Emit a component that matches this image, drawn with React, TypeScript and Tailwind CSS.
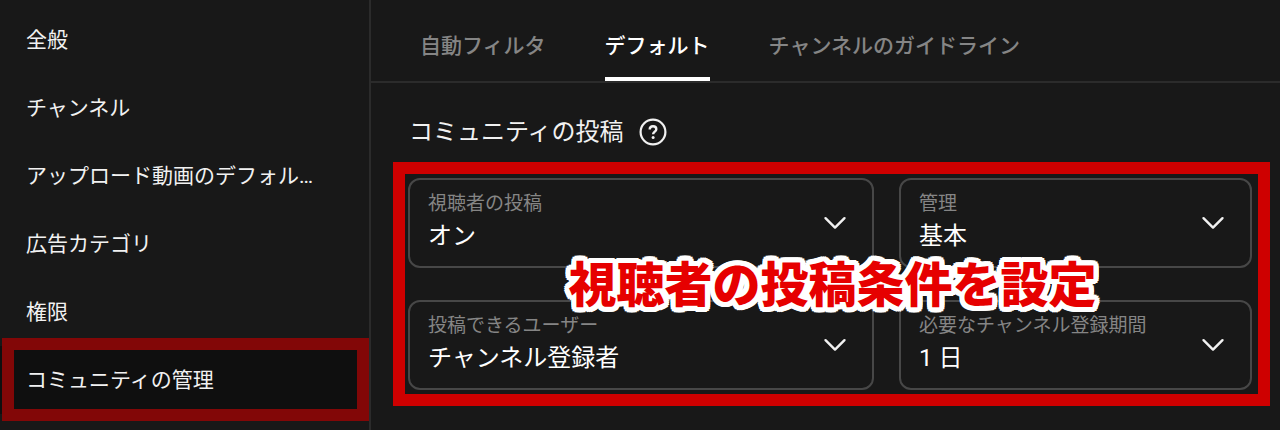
import React, { useState } from 'react';

interface SelectFieldProps {
  id: string;
  label: string;
  options: string[];
}

const menuItems = [
  '全般',
  'チャンネル',
  'アップロード動画のデフォル…',
  '広告カテゴリ',
  '権限',
  'コミュニティの管理',
];

const tabs = ['自動フィルタ', 'デフォルト', 'チャンネルのガイドライン'];

const HelpIcon: React.FC = () => (
  <svg viewBox="0 0 28 28" className="w-7 h-7" fill="none" stroke="currentColor" strokeWidth="2.2">
    <circle cx="14" cy="14" r="12.4" />
    <path d="M10.7 11.6c0-2 1.4-3.3 3.3-3.3s3.3 1.3 3.3 3c0 2.2-3.2 2.6-3.2 5" strokeWidth="2.4" />
    <circle cx="14.1" cy="19.4" r="1.5" fill="currentColor" stroke="none" />
  </svg>
);

const ChevronIcon: React.FC = () => (
  <svg
    viewBox="0 0 24 24"
    className="absolute right-[25px] top-1/2 -translate-y-1/2 w-6 h-6 pointer-events-none"
    fill="none"
    stroke="currentColor"
    strokeWidth="2.4"
    strokeLinecap="round"
    strokeLinejoin="round"
  >
    <path d="M2.5 7.2 12 16.6l9.5-9.4" />
  </svg>
);

const SelectField: React.FC<SelectFieldProps> = ({ id, label, options }) => (
  <div className="relative min-w-0 pt-2 pb-3.5 border-2 border-[#474747] rounded-xl">
    <label htmlFor={id} className="block pl-[18px] text-[19px] leading-8 text-[#858585] whitespace-nowrap">
      {label}
    </label>
    <select
      id={id}
      className="block w-full h-8 pl-[18px] pr-14 appearance-none bg-transparent text-2xl leading-8 text-white"
    >
      {options.map((option) => (
        <option key={option}>{option}</option>
      ))}
    </select>
    <ChevronIcon />
  </div>
);

export default function App() {
  const [page, setPage] = useState('コミュニティの管理');
  const [tab, setTab] = useState('デフォルト');

  return (
    <div className="flex min-h-screen bg-[#181818] text-[#f1f1f1] font-[Roboto,'Noto_Sans_CJK_JP',sans-serif]">
      <nav className="w-[371px] shrink-0 pt-1.5 border-r-2 border-[#2b2b2b]">
        {menuItems.map((item) => (
          <button
            key={item}
            type="button"
            onClick={() => setPage(item)}
            className={`relative block w-full h-17 pl-[26px] text-left text-[21px] leading-8 whitespace-nowrap ${
              page === item ? 'bg-[#0f0f0f]' : ''
            }`}
          >
            {item}
            {page === item && (
              <span className="absolute left-0.5 right-0 -top-2 -bottom-[7px] border-12 border-[#820707]" />
            )}
          </button>
        ))}
      </nav>

      <main className="flex-1 min-w-0">
        <div role="tablist" className="flex gap-[59px] h-[83px] pl-[49px] border-b-2 border-[#2b2b2b]">
          {tabs.map((name) => (
            <button
              key={name}
              type="button"
              role="tab"
              aria-selected={tab === name}
              onClick={() => setTab(name)}
              className={`pt-3.5 text-[21px] leading-8 font-medium whitespace-nowrap border-b-4 ${
                tab === name ? 'border-white text-white' : 'border-transparent text-[#858585]'
              }`}
            >
              {name}
            </button>
          ))}
        </div>

        <div className="flex items-center gap-[15px] pl-[38px] pt-[33px]">
          <h2 className="text-2xl">コミュニティの投稿</h2>
          <button type="button" aria-label="ヘルプ">
            <HelpIcon />
          </button>
        </div>

        <section className="relative mt-3.5 ml-[22px] mr-2.5 pt-1 pr-1.5 pb-1 pl-[3px] border-12 border-[#ce0000]">
          <div className="grid grid-cols-[466fr_353fr] gap-x-[25px] gap-y-8">
            <SelectField id="viewer-posts" label="視聴者の投稿" options={['オン', 'オフ']} />
            <SelectField id="moderation" label="管理" options={['基本', '強']} />
            <SelectField id="allowed-users" label="投稿できるユーザー" options={['チャンネル登録者', '全員']} />
            <SelectField id="subscribed-for" label="必要なチャンネル登録期間" options={['1 日', '7 日']} />
          </div>
          <p className="absolute inset-0 flex items-center justify-center pt-1 pl-0.5 text-5xl font-black text-[#e60000] whitespace-nowrap pointer-events-none [text-shadow:5px_0_white,5px_2px_white,4px_4px_white,2px_5px_white,0_5px_white,-2px_5px_white,-4px_4px_white,-5px_2px_white,-5px_0_white,-5px_-2px_white,-4px_-4px_white,-2px_-5px_white,0_-5px_white,2px_-5px_white,4px_-4px_white,5px_-2px_white,2px_2px_white,-2px_2px_white,-2px_-2px_white,2px_-2px_white]">
            視聴者の投稿条件を設定
          </p>
        </section>
      </main>
    </div>
  );
}
